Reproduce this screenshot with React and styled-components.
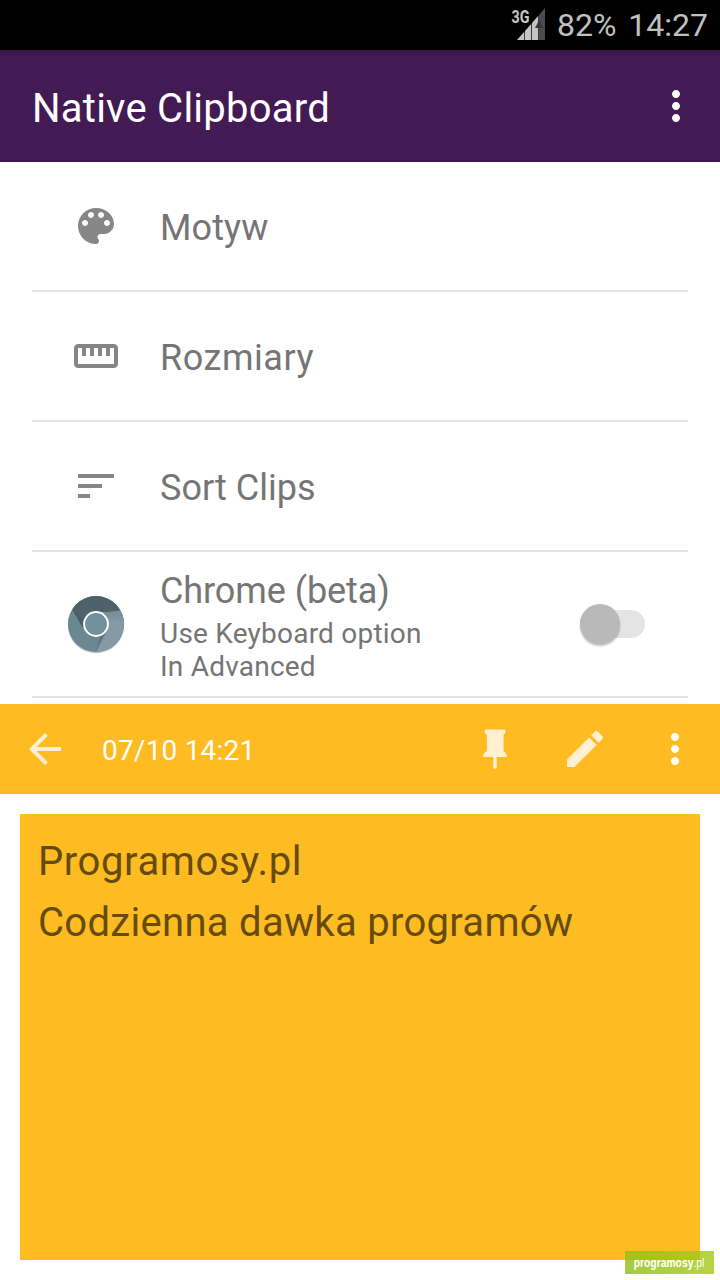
import React from 'react';
import { MdStraighten, MdSort, MdMoreVert, MdArrowBack, MdEdit } from 'react-icons/md';
import styled, { createGlobalStyle } from 'styled-components';

const PaletteIcon = () => (
  <svg width="48" height="48" viewBox="0 0 24 24">
    <path
      d="M12 3c-4.97 0-9 4.03-9 9s4.03 9 9 9c.83 0 1.5-.67 1.5-1.5 0-.39-.15-.74-.39-1.01-.23-.26-.38-.61-.38-.99 0-.83.67-1.5 1.5-1.5H16c2.76 0 5-2.24 5-5 0-4.42-4.03-8-9-8zm-5.5 9c-.83 0-1.5-.67-1.5-1.5S5.67 9 6.5 9 8 9.67 8 10.5 7.33 12 6.5 12zm3-4C8.67 8 8 7.33 8 6.5S8.67 5 9.5 5s1.5.67 1.5 1.5S10.33 8 9.5 8zm5 0c-.83 0-1.5-.67-1.5-1.5S13.67 5 14.5 5s1.5.67 1.5 1.5S15.33 8 14.5 8zm3 4c-.83 0-1.5-.67-1.5-1.5S16.67 9 17.5 9s1.5.67 1.5 1.5-.67 1.5-1.5 1.5z"
      fill="currentColor"
    />
  </svg>
);

const options = [
  { label: 'Motyw', Icon: PaletteIcon, spacing: 0.1 },
  { label: 'Rozmiary', Icon: MdStraighten, spacing: 0.55 },
  { label: 'Sort Clips', Icon: MdSort, spacing: 0.03 }
];

const SignalIcon = () => (
  <svg width="36" height="36" viewBox="510 6 36 36">
    <path d="M539 15L545 8v32h-6z" fill="#4c4c4c" />
    <path
      d="M517 40l7.3-8.2V40zM525 31l6.3-7.2V40H525zM532 23l6.3-7.2V40H532z"
      fill="#c4c4c4"
    />
    <path d="M535 28l4.2-8 4.2 8z" fill="#383838" />
    <text
      x="511.5"
      y="23"
      fill="#c4c4c4"
      fontSize="18"
      fontWeight="700"
      textLength="18"
      lengthAdjust="spacingAndGlyphs"
    >
      3G
    </text>
  </svg>
);

const ChromeIcon = () => (
  <svg width="60" height="60" viewBox="0 0 60 60">
    <defs>
      <clipPath id="disc">
        <circle cx="30" cy="30" r="28" />
      </clipPath>
      <linearGradient id="topFade" x1="0" y1="0" x2="0" y2="1">
        <stop offset="0" stopColor="#4c6069" />
        <stop offset="1" stopColor="#50656e" />
      </linearGradient>
      <linearGradient id="rightFade" x1="0" y1="0" x2="0" y2="1">
        <stop offset="0" stopColor="#758791" />
        <stop offset="0.3" stopColor="#8699a4" />
      </linearGradient>
    </defs>
    <circle cx="30" cy="31" r="28.2" fill="#b9c1c5" />
    <g clipPath="url(#disc)">
      <rect width="60" height="60" fill="#6a8792" />
      <path d="M30 17.5L61 15V60H29l12-23.5z" fill="url(#rightFade)" />
      <path d="M29.5 58.5L41 36l-6 5z" fill="#5b7681" />
      <path d="M6.5 16L0 0h60v15.5L42 18H30c-8 0-12.5 6-12.5 16z" fill="url(#topFade)" />
      <path d="M6.5 16l11 19 1-10z" fill="#48606a" />
    </g>
    <circle cx="30" cy="30" r="11.9" fill="#73909d" stroke="#fff" strokeWidth="2" />
  </svg>
);

const PinIcon = () => (
  <svg width="48" height="48" viewBox="0 0 48 48">
    <path
      d="M14.7 4.5h18.6q1 0 1 1V8q0 1-1.7 1.2V25q0 1.6 1.6 2.4Q35.8 28.6 35.8 31v1H25.7v11.5h-3.4V32H12.2v-1q0-2.4 1.6-3.6Q15.9 26.6 15.9 25V9.2Q13.7 9 13.7 8V5.5q0-1 1-1z"
      fill="currentColor"
    />
  </svg>
);

const App = () => {
  return (
    <Screen>
      <GlobalStyle />
      <StatusBar>
        <SignalIcon />
        <Battery>82%</Battery>
        <Clock>14:27</Clock>
      </StatusBar>
      <AppBar>
        <Title>Native Clipboard</Title>
        <MdMoreVert size={48} />
      </AppBar>
      <List>
        {options.map(({ label, Icon, spacing }) => (
          <Row key={label}>
            <IconSlot>
              <Icon size={48} />
            </IconSlot>
            <Label $spacing={spacing}>{label}</Label>
          </Row>
        ))}
        <Row $tall>
          <IconSlot>
            <ChromeIcon />
          </IconSlot>
          <Details>
            <Label $spacing={-0.08}>Chrome (beta)</Label>
            <Hint>
              Use Keyboard option
              <br />
              In Advanced
            </Hint>
          </Details>
          <Track>
            <Thumb />
          </Track>
        </Row>
      </List>
      <ClipBar>
        <Action>
          <MdArrowBack size={48} />
        </Action>
        <Stamp>07/10 14:21</Stamp>
        <Action>
          <PinIcon />
        </Action>
        <Action>
          <MdEdit size={48} />
        </Action>
        <Action $bright>
          <MdMoreVert size={48} />
        </Action>
      </ClipBar>
      <Clip>
        <Line $spacing={0.6}>Programosy.pl</Line>
        <Line $spacing={0.3}>Codzienna dawka programów</Line>
      </Clip>
      <Watermark>
        <WatermarkText>
          <b>programosy</b>.pl
        </WatermarkText>
      </Watermark>
    </Screen>
  );
};

const GlobalStyle = createGlobalStyle`
  * {
    box-sizing: border-box;
  }
  body {
    margin: 0;
    background: #fff;
    font-family: Roboto, sans-serif;
  }
  svg {
    display: block;
    flex: none;
  }
`;

const Screen = styled.div`
  position: relative;
  display: flex;
  flex-direction: column;
  width: 720px;
  height: 1280px;
  overflow: hidden;
  background: #fff;
`;

const StatusBar = styled.div`
  display: flex;
  align-items: center;
  justify-content: flex-end;
  height: 50px;
  padding: 0 12px 2px 0;
  background: #000;
  color: #c0c0c0;
  font-size: 32px;
  line-height: 38px;
`;

const Battery = styled.span`
  margin: 2px 0 0 11px;
`;

const Clock = styled.span`
  margin: 2px 0 0 12px;
`;

const AppBar = styled.header`
  display: flex;
  align-items: center;
  justify-content: space-between;
  height: 112px;
  padding: 0 20px 0 32px;
  background: linear-gradient(#3a1649, #421a54 8px, #421a54 110px, #3b174b);
  color: #fff;
`;

const Title = styled.h1`
  margin: 6px 0 0;
  font-size: 40px;
  font-weight: 400;
  line-height: 48px;
  letter-spacing: 0.25px;
`;

const List = styled.div`
  height: 542px;
  padding: 0 32px;
`;

const Row = styled.div`
  display: flex;
  align-items: center;
  height: ${(props) => (props.$tall ? 146 : 130)}px;
  padding: 0 43px 0 34px;
  border-bottom: 2px solid #e4e4e4;
`;

const IconSlot = styled.div`
  display: flex;
  justify-content: center;
  width: 60px;
  margin-right: 34px;
  color: #868686;
`;

const Label = styled.div`
  padding-top: 4px;
  color: #757575;
  font-size: 36px;
  line-height: 44px;
  letter-spacing: ${(props) => props.$spacing}px;
`;

const Details = styled.div`
  flex: 1;
`;

const Hint = styled.div`
  padding-top: 4px;
  color: #757575;
  font-size: 28px;
  line-height: 33px;
  letter-spacing: 0.22px;
`;

const Track = styled.div`
  display: flex;
  align-items: center;
  width: 65px;
  height: 28px;
  border-radius: 14px;
  background: linear-gradient(90deg, transparent 20px, #e4e4e4 20px);
`;

const Thumb = styled.div`
  width: 40px;
  height: 40px;
  border-radius: 50%;
  background: #b9b9b9;
  box-shadow: 0 2px 2px rgba(0, 0, 0, 0.25);
`;

const ClipBar = styled.div`
  display: flex;
  align-items: center;
  height: 90px;
  background: #ffbb22;
`;

const Action = styled.div`
  display: flex;
  justify-content: center;
  width: 90px;
  color: ${(props) => (props.$bright ? '#fff' : '#fff0d2')};
`;

const Stamp = styled.div`
  flex: 1;
  padding: 3px 0 0 12px;
  color: #fff;
  font-size: 28px;
  line-height: 34px;
  letter-spacing: 0.2px;
`;

const Clip = styled.div`
  height: 446px;
  margin: 20px 20px 0;
  padding: 17px 18px;
  background: #ffbb22;
`;

const Line = styled.div`
  color: #664b0e;
  font-size: 40px;
  line-height: 61px;
  letter-spacing: ${(props) => props.$spacing}px;
`;

const Watermark = styled.div`
  position: absolute;
  left: 625px;
  top: 1251px;
  display: flex;
  align-items: center;
  justify-content: center;
  width: 89px;
  height: 23px;
  background: linear-gradient(90deg, rgba(146, 192, 24, 0.82), rgba(166, 202, 28, 0.82));
  color: #fff;
  font-family: 'Liberation Sans', sans-serif;
  font-size: 12px;
`;

const WatermarkText = styled.span`
  flex: none;
  transform: scaleX(0.86);
`;

export default App;
